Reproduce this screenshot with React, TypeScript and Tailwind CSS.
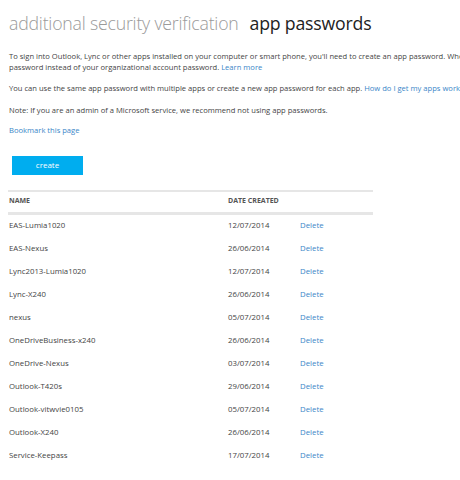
import React from "react";

const rows: [string, string][] = [
  ["EAS-Lumia1020", "12/07/2014"],
  ["EAS-Nexus", "26/06/2014"],
  ["Lync2013-Lumia1020", "12/07/2014"],
  ["Lync-X240", "26/06/2014"],
  ["nexus", "05/07/2014"],
  ["OneDriveBusiness-x240", "26/06/2014"],
  ["OneDrive-Nexus", "03/07/2014"],
  ["Outlook-T420s", "29/06/2014"],
  ["Outlook-vitwvie0105", "05/07/2014"],
  ["Outlook-X240", "26/06/2014"],
  ["Service-Keepass", "17/07/2014"],
];

export default function App() {
  return (
    <div
      className="w-[460px] h-[480px] overflow-hidden bg-white text-[#444]"
      style={{ fontFamily: '"Open Sans", "Noto Sans", sans-serif' }}
    >
      <div className="pl-[9px] pt-[10px] flex items-baseline gap-[11px] whitespace-nowrap">
        <span className="text-[17.7px] font-light text-[#9a9a9a] tracking-[-0.2px]">additional security verification</span>
        <span className="text-[17.7px] text-[#222] tracking-[-0.2px]">app passwords</span>
      </div>
      <div className="pl-[9px] mt-[14px] text-[7.6px] leading-[11px] whitespace-nowrap">
        <p>
          To sign into Outlook, Lync or other apps installed on your computer or smart phone, you'll need to create an app password. When prompted, use the
          <br />
          password instead of your organizational account password. <span className="text-[#3a86c8]">Learn more</span>
        </p>
        <p className="mt-[10px]">
          You can use the same app password with multiple apps or create a new app password for each app.{" "}
          <span className="text-[#3a86c8]">How do I get my apps working?</span>
        </p>
        <p className="mt-[11px]">Note: If you are an admin of a Microsoft service, we recommend not using app passwords.</p>
        <p className="mt-[9px] text-[#3a86c8]">Bookmark this page</p>
      </div>
      <div className="pl-[12px] mt-[20px]">
        <div className="w-[71px] h-[19px] bg-[#00adef] text-white text-[8px] flex items-center justify-center">create</div>
      </div>
      <div className="ml-[8px] mt-[15px] w-[365px] text-[7.8px]">
        <div className="border-t-2 border-b-[3px] border-[#e6e6e6] h-[25px] flex items-center font-bold text-[7px] text-[#555] uppercase">
          <div className="w-[220px] pl-[1px]">Name</div>
          <div>Date Created</div>
        </div>
        {rows.map(([n, d]) => (
          <div key={n} className="h-[23px] flex items-center">
            <div className="w-[220px] pl-[1px]">{n}</div>
            <div className="w-[72px]">{d}</div>
            <div className="text-[#3a86c8]">Delete</div>
          </div>
        ))}
      </div>
    </div>
  );
}
